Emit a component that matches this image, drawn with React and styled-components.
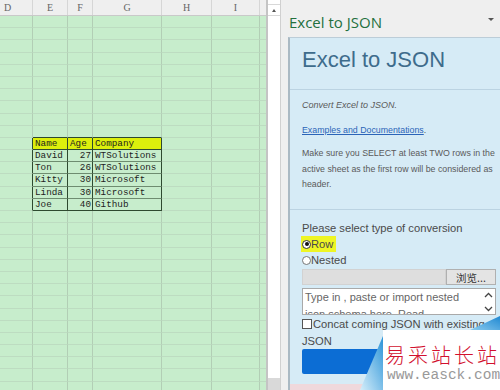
import React from 'react';
import styled, { createGlobalStyle } from 'styled-components';

const Global = createGlobalStyle`
  html, body { margin: 0; padding: 0; width: 500px; height: 390px; overflow: hidden; background: #efefef; }
  #root { width: 500px; height: 390px; }
  * { box-sizing: border-box; }
`;

const Screen = styled.div`
  position: relative;
  display: flex;
  width: 500px;
  height: 390px;
  overflow: hidden;
`;

/* ---------- spreadsheet ---------- */
const Sheet = styled.div`
  flex: none;
  width: 266px;
  height: 390px;
  overflow: hidden;
  background: #c7edcc;
  display: flex;
  flex-direction: column;
`;

const COLS = '50px 35px 25px 69px 50px 48px 40px';

const HeadRow = styled.div`
  flex: none;
  margin-left: -17px;
  display: grid;
  grid-template-columns: ${COLS};
  height: 16px;
  background: #efefef;
  border-bottom: 1px solid #c9c9c9;
`;

const HeadCell = styled.div`
  display: flex;
  align-items: center;
  justify-content: center;
  border-right: 1px solid #d6d6d6;
  font-family: 'Liberation Serif', serif;
  font-size: 10px;
  color: #666;
`;

const SheetRow = styled.div`
  flex: none;
  margin-left: -17px;
  display: grid;
  grid-template-columns: ${COLS};
  height: 12.2px;
`;

const Cell = styled.div`
  height: 12.2px;
  border-right: 1px solid ${(p) => (p.$darkRight ? '#2e4a30' : '#b2ceb5')};
  border-bottom: 1px solid
    ${(p) => (p.$darkBottom ? '#2e4a30' : p.$midBottom ? '#6e8c70' : '#bddcc1')};
  background: ${(p) => (p.$head ? '#dcef0c' : 'transparent')};
  font-family: 'Liberation Mono', monospace;
  font-size: 9.3px;
  line-height: 11px;
  color: #1e1e1e;
  padding: 0 1px 0 2px;
  text-align: ${(p) => (p.$num ? 'right' : 'left')};
  white-space: nowrap;
  overflow: hidden;
`;

const VScroll = styled.div`
  flex: none;
  width: 15px;
  height: 390px;
  display: flex;
  flex-direction: column;
  background: #ffffff;
  border-left: 2px solid #c4c4c4;
  border-right: 1px solid #d0d0d0;
`;

const ArrowBox = styled.div`
  flex: none;
  height: 12px;
  margin-top: 4px;
  border-top: 1px solid #d8d8d8;
  border-bottom: 1px solid #d8d8d8;
  display: flex;
  align-items: center;
  justify-content: center;
`;

const UpTri = styled.span`
  width: 0;
  height: 0;
  border-left: 2.5px solid transparent;
  border-right: 2.5px solid transparent;
  border-bottom: 3px solid #555;
`;

const Track = styled.div`
  flex: 1;
`;

const Corner = styled.div`
  flex: none;
  height: 12px;
  background: #d9d9d9;
`;

/* ---------- task pane ---------- */
const Pane = styled.div`
  flex: 1;
  display: flex;
  flex-direction: column;
  background: #efefef;
  padding-left: 7px;
  min-width: 0;
`;

const PaneHead = styled.div`
  flex: none;
  height: 37px;
  display: flex;
  align-items: center;
  justify-content: space-between;
  padding: 6px 6px 0 1px;
`;

const PaneTitle = styled.div`
  font-family: 'Open Sans', 'Noto Sans', sans-serif;
  font-size: 15px;
  color: #23703e;
`;

const DownTri = styled.span`
  width: 0;
  height: 0;
  border-left: 3px solid transparent;
  border-right: 3px solid transparent;
  border-top: 3.5px solid #555;
  margin-top: -4px;
`;

const Card = styled.div`
  flex: 1;
  display: flex;
  flex-direction: column;
  background: #d6ebf6;
  border-left: 2px solid #aab9c3;
  border-top: 1px solid #bccdd8;
  font-family: 'Liberation Sans', Arial, sans-serif;
  color: #555;
`;

const CardHead = styled.div`
  flex: none;
  padding: 9px 12px 16px;
  border-bottom: 1px solid #bbd3e2;
`;

const CardTitle = styled.div`
  font-size: 22px;
  line-height: 26px;
  color: #3e6c8c;
`;

const Intro = styled.div`
  flex: none;
  height: 120px;
  padding: 8px 0 0 12px;
  border-bottom: 1px solid #bbd3e2;
  display: flex;
  flex-direction: column;
`;

const Small = styled.p`
  margin: 0 0 ${(p) => p.$gap || 0}px;
  font-size: ${(p) => p.$size || 8.8}px;
  line-height: ${(p) => p.$lh || 15}px;
  font-style: ${(p) => (p.$italic ? 'italic' : 'normal')};
  color: #5a5a5a;
  white-space: nowrap;
`;

const DocLink = styled.a`
  color: #2b64b8;
  text-decoration: underline;
`;

const Options = styled.div`
  flex: none;
  padding: 11px 4px 0 12px;
  display: flex;
  flex-direction: column;
`;

const Prompt = styled.div`
  font-size: 11.2px;
  line-height: 15px;
  color: #4a4a4a;
`;

const RadioLine = styled.label`
  display: flex;
  align-items: center;
  align-self: flex-start;
  height: 16px;
  margin-left: -1px;
  padding: 0 3px 0 1px;
  font-size: 11.2px;
  color: #4a4a4a;
  background: ${(p) => (p.$mark ? '#eef524' : 'transparent')};
`;

const Radio = styled.span`
  width: 9px;
  height: 9px;
  border-radius: 50%;
  border: 1px solid ${(p) => (p.$on ? '#333' : '#777')};
  background: #fff;
  display: flex;
  align-items: center;
  justify-content: center;
  &::after {
    content: '';
    width: 4px;
    height: 4px;
    border-radius: 50%;
    background: ${(p) => (p.$on ? '#111' : 'transparent')};
  }
`;

const FileRow = styled.div`
  display: flex;
  height: 16px;
  margin-top: 1px;
`;

const FileField = styled.div`
  flex: 1;
  background: #dedede;
  border: 1px solid #d2d2d2;
`;

const Browse = styled.div`
  flex: none;
  width: 50px;
  display: flex;
  align-items: center;
  justify-content: center;
  background: #e4e4e4;
  border: 1px solid #b0b0b0;
  font-family: 'Noto Sans CJK SC', sans-serif;
  font-size: 10.5px;
  color: #333;
`;

const TextBox = styled.div`
  display: flex;
  height: 27px;
  margin-top: 3px;
  background: #fff;
  border: 1px solid #a9a9a9;
  overflow: hidden;
`;

const TextBody = styled.div`
  flex: 1;
  padding: 0 2px;
  font-size: 11px;
  line-height: 17px;
  color: #666;
  overflow: hidden;
`;

const Spin = styled.div`
  flex: none;
  width: 14px;
  display: flex;
  flex-direction: column;
  justify-content: space-between;
  align-items: center;
  padding: 3px 0 2px;
`;

const CheckLine = styled.label`
  display: flex;
  align-items: center;
  gap: 1px;
  height: 14px;
  margin-top: 2px;
  font-size: 11.2px;
  color: #4a4a4a;
  white-space: nowrap;
`;

const Box = styled.span`
  width: 10px;
  height: 10px;
  border: 1px solid #555;
  background: #fff;
`;

const Label = styled.div`
  margin-top: 3px;
  font-size: 11.2px;
  line-height: 14px;
  color: #4a4a4a;
`;

const Convert = styled.div`
  height: 25px;
  margin-top: 1px;
  background: #0c6dd4;
  border-radius: 2px;
`;

const NextBand = styled.div`
  flex: none;
  height: 10px;
  margin-top: 10px;
  background: #efd8dc;
`;

/* ---------- watermark overlay ---------- */
const Watermark = styled.div`
  position: absolute;
  left: 355px;
  top: 316px;
  width: 145px;
  height: 74px;
`;

const MarkShape = styled.svg`
  position: absolute;
  inset: 0;
`;

const MarkText = styled.div`
  position: absolute;
  left: 30px;
  top: 27px;
  display: flex;
  flex-direction: column;
`;

const MarkCn = styled.span`
  font-family: 'Noto Sans CJK SC', serif;
  font-size: 20px;
  line-height: 24px;
  letter-spacing: 3px;
  color: #d2102e;
  font-weight: 300;
`;

const MarkUrl = styled.span`
  font-family: 'Liberation Mono', monospace;
  font-size: 14.5px;
  line-height: 16px;
  color: #999;
  margin-left: 2px;
`;

const cols = ['D', 'E', 'F', 'G', 'H', 'I', ''];
const table = [
  ['Name', 'Age', 'Company'],
  ['David', '27', 'WTSolutions'],
  ['Ton', '26', 'WTSolutions'],
  ['Kitty', '30', 'Microsoft'],
  ['Linda', '30', 'Microsoft'],
  ['Joe', '40', 'Github'],
];
const TOP = 10;

function SheetGrid() {
  const rows = [];
  for (let r = 0; r < 31; r++) {
    const t = r - TOP;
    const inTable = t >= 0 && t < table.length;
    rows.push(
      <SheetRow key={r}>
        {cols.map((c, ci) => {
          const tc = ci - 1;
          const isT = inTable && tc >= 0 && tc < 3;
          const props = {};
          if (isT) {
            props.$darkRight = true;
            if (t === 0) {
              props.$head = true;
              props.$darkBottom = true;
            } else if (t === table.length - 1) props.$darkBottom = true;
            else props.$midBottom = true;
            props.$num = tc === 1 && t > 0;
          }
          if (inTable && ci === 0) props.$darkRight = true;
          if (r === TOP - 1 && tc >= 0 && tc < 3) props.$darkBottom = true;
          return (
            <Cell key={ci} {...props}>
              {isT ? table[t][tc] : ''}
            </Cell>
          );
        })}
      </SheetRow>
    );
  }
  return rows;
}

function Chevron({ up }) {
  return (
    <svg width="9" height="6" viewBox="0 0 9 6">
      <path
        d={up ? 'M1 5 L4.5 1.5 L8 5' : 'M1 1 L4.5 4.5 L8 1'}
        fill="none"
        stroke="#444"
        strokeWidth="1.3"
      />
    </svg>
  );
}

export default function App() {
  return (
    <Screen>
      <Global />
      <Sheet>
        <HeadRow>
          {cols.map((c, i) => (
            <HeadCell key={i}>{c}</HeadCell>
          ))}
        </HeadRow>
        <SheetGrid />
      </Sheet>
      <VScroll>
        <ArrowBox>
          <UpTri />
        </ArrowBox>
        <Track />
        <Corner />
      </VScroll>
      <Pane>
        <PaneHead>
          <PaneTitle>Excel to JSON</PaneTitle>
          <DownTri />
        </PaneHead>
        <Card>
          <CardHead>
            <CardTitle>Excel to JSON</CardTitle>
          </CardHead>
          <Intro>
            <Small $italic $size={9} $gap={10}>Convert Excel to JSON.</Small>
            <Small $gap={8}>
              <DocLink>Examples and Documentations</DocLink>.
            </Small>
            <Small $size={8.8} $lh={15.5}>
              Make sure you SELECT at least TWO rows in the
              <br />
              active sheet as the first row will be considered as
              <br />
              header.
            </Small>
          </Intro>
          <Options>
            <Prompt>Please select type of conversion</Prompt>
            <RadioLine $mark>
              <Radio $on />
              Row
            </RadioLine>
            <RadioLine>
              <Radio />
              Nested
            </RadioLine>
            <FileRow>
              <FileField />
              <Browse>浏览...</Browse>
            </FileRow>
            <TextBox>
              <TextBody>
                Type in , paste or import nested json schema here. Read
              </TextBody>
              <Spin>
                <Chevron up />
                <Chevron />
              </Spin>
            </TextBox>
            <CheckLine>
              <Box />
              Concat coming JSON with existing
            </CheckLine>
            <Label>JSON</Label>
            <Convert />
          </Options>
          <NextBand />
        </Card>
      </Pane>
      <Watermark>
        <MarkShape width="145" height="74" viewBox="0 0 145 74">
          <defs>
            <linearGradient id="wmBlueA" x1="0" y1="1" x2="1" y2="0">
              <stop offset="0" stopColor="#d5eefa" />
              <stop offset="1" stopColor="#2a93d8" />
            </linearGradient>
            <linearGradient id="wmBlueB" x1="0" y1="1" x2="1" y2="0">
              <stop offset="0" stopColor="#8ccbee" />
              <stop offset="1" stopColor="#1f88d2" />
            </linearGradient>
          </defs>
          <polygon points="5,74 28,20 28,74" fill="url(#wmBlueA)" />
          <polygon points="115,14 145,0 145,14" fill="url(#wmBlueB)" />
          <rect x="28" y="14" width="117" height="60" fill="#ffffff" />
        </MarkShape>
        <MarkText>
          <MarkCn>易采站长站</MarkCn>
          <MarkUrl>www.easck.com</MarkUrl>
        </MarkText>
      </Watermark>
    </Screen>
  );
}
